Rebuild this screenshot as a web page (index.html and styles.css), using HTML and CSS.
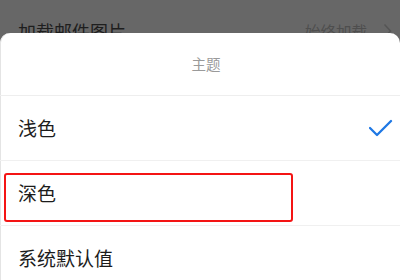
FILE: index.html
```html
<!DOCTYPE html>
<html lang="zh">
<head>
<meta charset="utf-8">
<title>主题</title>
<link rel="stylesheet" href="styles.css">
</head>
<body>
<div class="page">
  <div class="behind">
    <span class="behind-label">加载邮件图片</span>
    <span class="behind-value">始终加载<svg class="chevron" width="9" height="16" viewBox="0 0 9 16"><polyline points="1.5,1.5 7.5,8 1.5,14.5" fill="none" stroke="#555" stroke-width="1.5"/></svg></span>
  </div>
  <div class="sheet">
    <div class="sheet-title">主题</div>
    <ul class="options">
      <li class="option"><span>浅色</span><svg class="check" width="24" height="18" viewBox="0 0 24 18"><polyline points="1,9 8,16 22,2" fill="none" stroke="#1f78e4" stroke-width="2.3" stroke-linecap="round" stroke-linejoin="round"/></svg></li>
      <li class="option option-marked"><span>深色</span><span class="highlight"></span></li>
      <li class="option"><span>系统默认值</span></li>
    </ul>
  </div>
</div>
</body>
</html>
```

FILE: styles.css
```css
* { box-sizing: border-box; }
html, body { margin: 0; padding: 0; }
body {
  width: 400px;
  height: 280px;
  overflow: hidden;
  background: #676767;
  font-family: "Noto Sans CJK SC", "Noto Sans", sans-serif;
}
.page {
  display: flex;
  flex-direction: column;
  height: 280px;
}
.behind {
  height: 33px;
  overflow: hidden;
  display: flex;
  justify-content: space-between;
  align-items: flex-start;
  padding: 19px 8px 0 18px;
  flex: none;
}
.behind-label {
  font-size: 18px;
  line-height: 24px;
  color: #1e1e1e;
}
.behind-value {
  display: flex;
  align-items: center;
  gap: 16px;
  font-size: 15.5px;
  line-height: 24px;
  color: #4e4e4e;
}
.chevron { display: block; }
.sheet {
  flex: 1;
  background: #fff;
  border-radius: 10px 10px 0 0;
  box-shadow: inset 1px 0 0 #e4e4e4;
}
.sheet-title {
  height: 63px;
  line-height: 62px;
  border-bottom: 1px solid #eeeeee;
  text-align: center;
  padding-left: 12px;
  font-size: 14.5px;
  color: #9a9a9a;
}
.options {
  list-style: none;
  margin: 0;
  padding: 0;
}
.option {
  position: relative;
  height: 65px;
  border-bottom: 1px solid #f0f0f0;
  display: flex;
  align-items: center;
  justify-content: space-between;
  padding: 0 7px 1px 18px;
  font-size: 19px;
  color: #1c1c1c;
}
.check { display: block; }
.highlight {
  position: absolute;
  left: 4px;
  top: 12px;
  width: 289px;
  height: 49px;
  border: 2.5px solid #f41414;
  border-radius: 3px;
}
```
